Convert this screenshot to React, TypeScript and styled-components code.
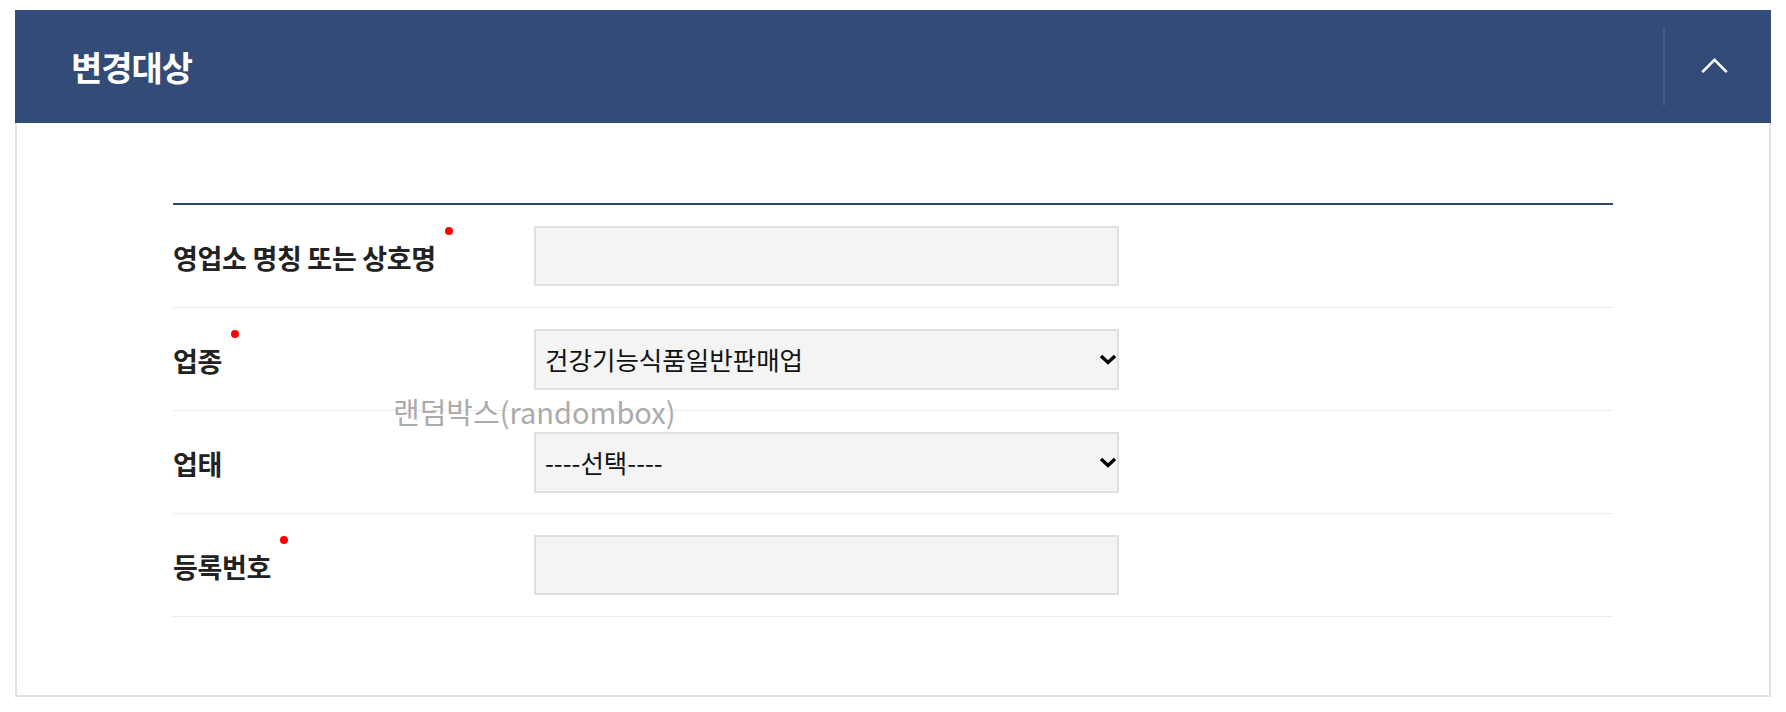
import React from "react"
import styled, { createGlobalStyle } from "styled-components"

const GlobalStyle = createGlobalStyle`
  html, body {
    margin: 0;
    padding: 0;
    background: #fff;
    font-family: "Noto Sans CJK KR", "Noto Sans", sans-serif;
  }
`

interface FieldRow {
  label: string
  required?: boolean
  kind: "text" | "select"
  value?: string
  options?: string[]
}

const rows: FieldRow[] = [
  { label: "영업소 명칭 또는 상호명", required: true, kind: "text" },
  {
    label: "업종",
    required: true,
    kind: "select",
    value: "건강기능식품일반판매업",
    options: ["건강기능식품일반판매업", "건강기능식품유통전문판매업"],
  },
  { label: "업태", kind: "select", value: "----선택----", options: ["----선택----"] },
  { label: "등록번호", required: true, kind: "text" },
]

const SelectArrow = () => (
  <ArrowIcon viewBox="0 0 18 11" width="18" height="11">
    <path d="M2 2 L9 8.5 L16 2" fill="none" stroke="#000" strokeWidth="3.4" />
  </ArrowIcon>
)

const App: React.FC = () => {
  return (
    <Page>
      <GlobalStyle />
      <Panel>
        <PanelHeader>
          <PanelTitle>변경대상</PanelTitle>
          <ToggleButton type="button" aria-label="접기">
            <svg viewBox="0 0 30 17" width="29" height="16">
              <path d="M2 15 L15 2 L28 15" fill="none" stroke="#fff" strokeWidth="2.8" />
            </svg>
          </ToggleButton>
        </PanelHeader>
        <PanelBody>
          <FormTable>
            {rows.map(row => (
              <Row key={row.label}>
                <Label>
                  <LabelText $required={row.required}>{row.label}</LabelText>
                </Label>
                <Field>
                  {row.kind === "text" ? (
                    <TextInput type="text" />
                  ) : (
                    <SelectWrap>
                      <Select defaultValue={row.value}>
                        {row.options?.map(opt => (
                          <option key={opt}>{opt}</option>
                        ))}
                      </Select>
                      <SelectArrow />
                    </SelectWrap>
                  )}
                </Field>
              </Row>
            ))}
            <Watermark>랜덤박스(randombox)</Watermark>
          </FormTable>
        </PanelBody>
      </Panel>
    </Page>
  )
}

export default App

const Page = styled.div`
  padding: 10px 15px;
  width: 1786px;
  box-sizing: border-box;
`

const Panel = styled.section`
  display: flex;
  flex-direction: column;
`

const PanelHeader = styled.header`
  display: flex;
  align-items: center;
  justify-content: space-between;
  height: 113px;
  background: #334b77;
`

const PanelTitle = styled.h2`
  margin: 0 0 0 56px;
  color: #fff;
  font-size: 34px;
  font-weight: 700;
  letter-spacing: -1px;
  line-height: 1;
`

const ToggleButton = styled.button`
  display: flex;
  align-items: center;
  justify-content: center;
  width: 108px;
  height: 78px;
  padding: 0 8px 2px 0;
  background: transparent;
  border: 0;
  border-left: 2px solid #42598a;
  cursor: pointer;
`

const PanelBody = styled.div`
  padding: 80px 156px 78px;
  border: 2px solid #e1e1e1;
  border-top: 0;
`

const FormTable = styled.div`
  position: relative;
  border-top: 2px solid #2c4572;
`

const Row = styled.div`
  display: grid;
  grid-template-columns: 361px 585px;
  align-items: center;
  height: 102px;
  border-bottom: 1px solid #ececec;
`

const Label = styled.div`
  padding-top: 4px;
`

const LabelText = styled.span<{ $required?: boolean }>`
  position: relative;
  display: inline-block;
  color: #222;
  font-size: 27px;
  font-weight: 700;
  letter-spacing: -0.3px;
  line-height: 30px;

  &::after {
    content: "";
    display: ${p => (p.$required ? "block" : "none")};
    position: absolute;
    top: -16px;
    right: -17px;
    width: 8px;
    height: 8px;
    border-radius: 50%;
    background: #f00;
  }
`

const Field = styled.div`
  display: flex;
`

const TextInput = styled.input`
  box-sizing: border-box;
  width: 585px;
  height: 60px;
  margin: 0;
  padding: 0 10px;
  background: #f4f4f4;
  border: 2px solid #e0e0e0;
  font-family: "Noto Sans CJK KR", sans-serif;
  font-size: 25px;
  outline: none;
`

const SelectWrap = styled.div`
  position: relative;
  width: 585px;
  height: 61px;
`

const Select = styled.select`
  box-sizing: border-box;
  width: 100%;
  height: 100%;
  margin: 0;
  padding: 0 30px 2px 9px;
  appearance: none;
  background: #f4f4f4;
  border: 2px solid #e0e0e0;
  border-radius: 0;
  color: #111;
  font-family: "Noto Sans CJK KR", sans-serif;
  font-size: 25.5px;
  outline: none;
`

const ArrowIcon = styled.svg`
  position: absolute;
  top: 50%;
  right: 2px;
  margin-top: -5px;
  pointer-events: none;
`

const Watermark = styled.span`
  position: absolute;
  left: 220px;
  top: 192px;
  color: #ababab;
  font-size: 29px;
  line-height: 1;
  white-space: nowrap;
  pointer-events: none;
`
